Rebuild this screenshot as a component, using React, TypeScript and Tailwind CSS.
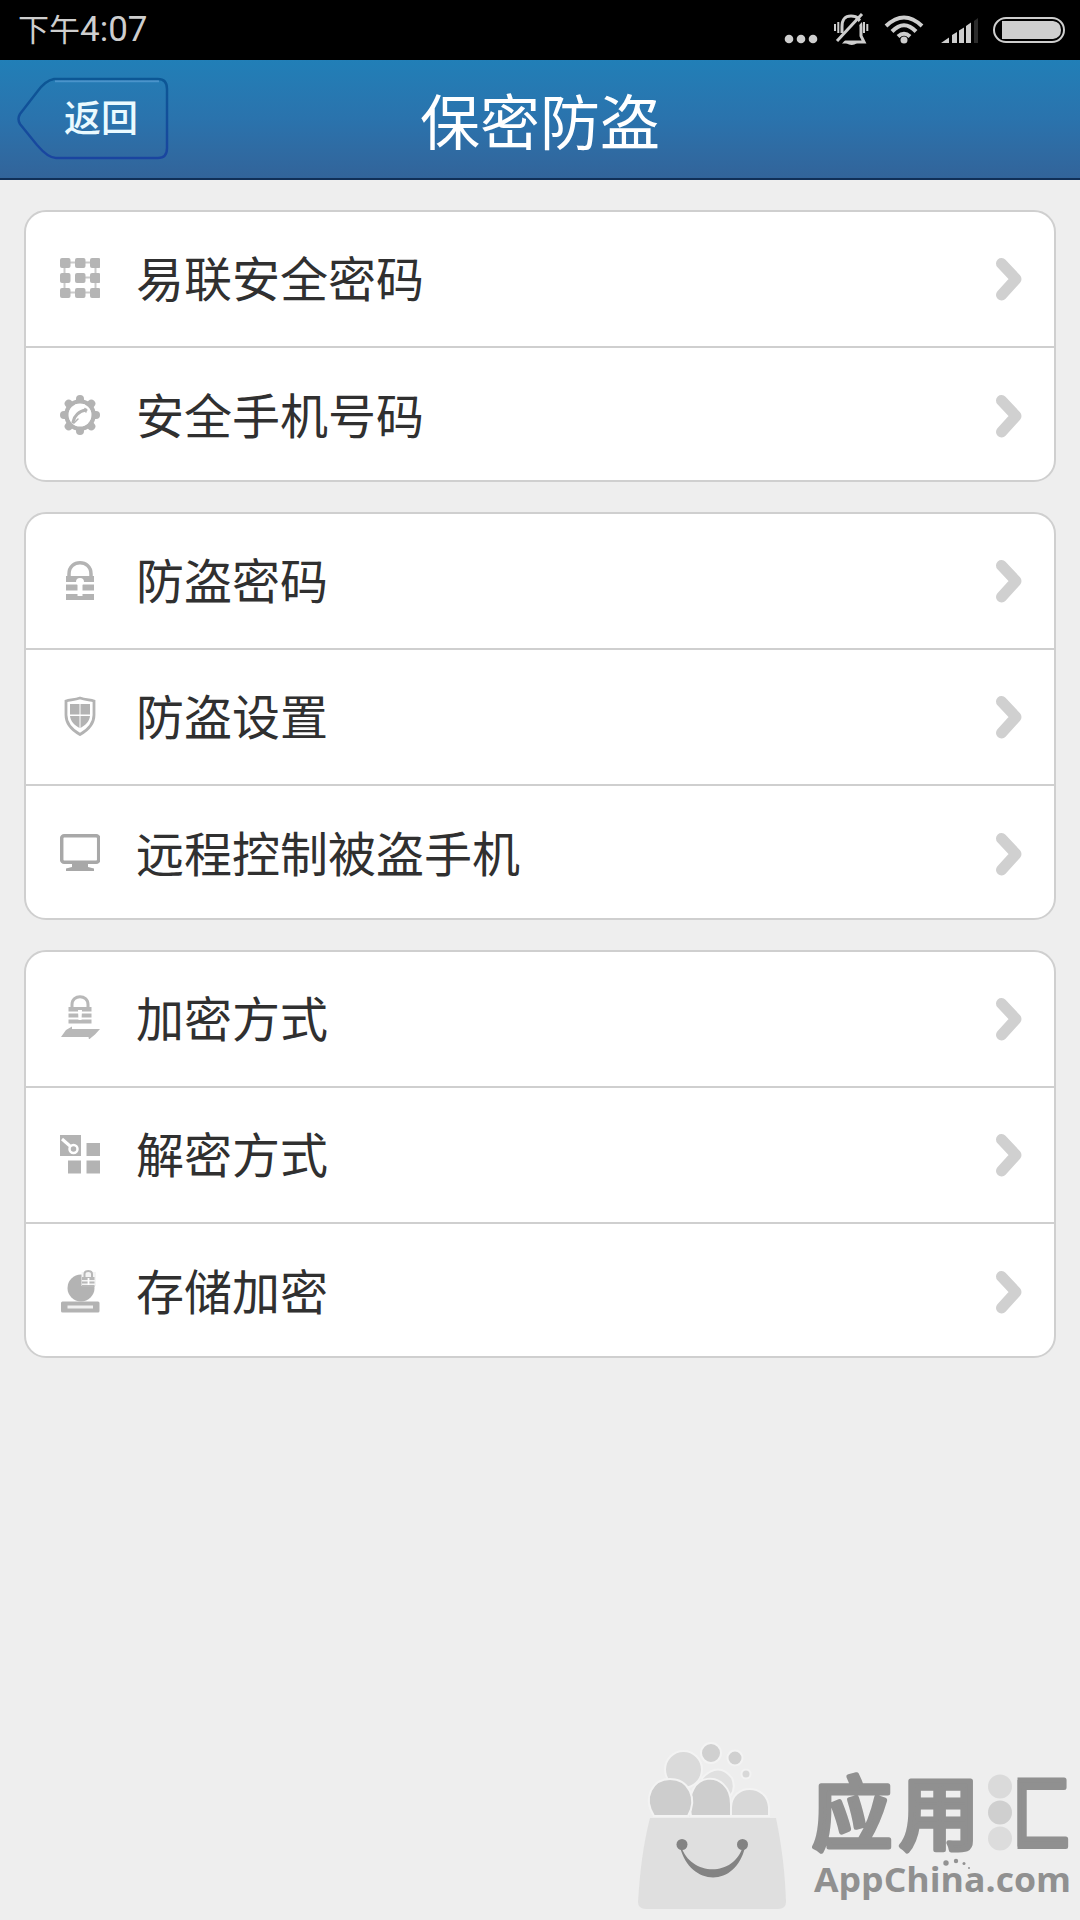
import type { ReactNode } from "react";

const cjk = "font-['Noto_Sans_CJK_SC',sans-serif]";

function Keypad() {
  const pts = [0, 15, 30];
  return (
    <svg viewBox="0 0 40 40" className="mb-[2px] h-10 w-10" fill="#b5b5b5">
      <path d="M4 4.500H36M4 34.500H36M17 19.500H36M4.500 4V34M35.500 4V34" stroke="#cacaca" strokeWidth="2" fill="none" />
      {pts.map((y) => pts.map((x) => <rect key={`${x}-${y}`} x={x} y={y} width="10.500" height="10" rx="2" />))}
    </svg>
  );
}

function Gear() {
  return (
    <svg viewBox="0 0 40 40" className="mb-[2px] h-10 w-10" fill="none" stroke="#b3b3b3">
      <circle cx="20" cy="20" r="13.500" strokeWidth="4.500" />
      {[0, 45, 90, 135, 180, 225, 270, 315].map((a) => (
        <path key={a} d="M20 7V4" strokeWidth="8" strokeLinecap="round" transform={`rotate(${a} 20 20)`} />
      ))}
      <circle cx="20" cy="20" r="11.500" fill="#fff" stroke="none" />
      <path d="M13 27C14 21 19 16 26 15" strokeWidth="3" strokeLinecap="round" />
      <path d="M14 28L18 24M25 13.500L26 17" strokeWidth="1.500" strokeLinecap="round" />
    </svg>
  );
}

function Lock() {
  return (
    <svg viewBox="0 0 40 40" className="h-10 w-10" fill="#b3b3b3">
      <path d="M9 17V13C9 -2 31 -2 31 13V17" fill="none" stroke="#b3b3b3" strokeWidth="3.500" />
      <path d="M6 15H34V21H6ZM6 23.500H34V29.500H6ZM6 33H34V39H6Z" />
      <path d="M16 21a4 4 0 1 1 8 0L22.500 24V35H17.500V24Z" fill="#fff" />
    </svg>
  );
}

function Shield() {
  return (
    <svg viewBox="0 0 40 40" className="mb-[2px] h-10 w-10" fill="#b3b3b3">
      <path d="M20 2C25 3.500 30 4 34 5V19C34 28 28 34 20 38.500C12 34 6 28 6 19V5C10 4 15 3.500 20 2Z" fill="none" stroke="#b3b3b3" strokeWidth="2.800" />
      <path d="M10 8H19.500V18.500H10ZM20.500 8H30V18.500H20.500ZM10 20H19.500V32C14 29 10.500 25 10 20ZM20.500 20H30C29.500 25 26 29 20.500 32Z" />
    </svg>
  );
}

function Monitor() {
  return (
    <svg viewBox="0 0 40 40" className="mb-[3px] h-10 w-10" fill="#a8a8a8">
      <rect x="1.700" y="3.700" width="37" height="26.500" rx="2.500" fill="none" stroke="#a8a8a8" strokeWidth="3.500" />
      <path d="M12 31H28V35L34 36.500V39H6V36.500L12 35Z" />
    </svg>
  );
}

function LockSync() {
  return (
    <svg viewBox="0 0 40 44" className="mb-1 h-11 w-10" fill="#b8b8b8">
      <path d="M12 14V9.500C12 -1 28 -1 28 9.500V14" fill="none" stroke="#b8b8b8" strokeWidth="3" />
      <path d="M8.500 12H31.500V16.500H8.500ZM8.500 18.500H31.500V22.500H8.500ZM8.500 24.500H31.500V28.500H8.500Z" />
      <path d="M18 15H22L21.500 25H18.500Z" fill="#fff" />
      <path d="M1 42L6 35L12 31.500L12 34H40L35 39.500L29 44.500L28.500 42H1Z" />
    </svg>
  );
}

function Tiles() {
  return (
    <svg viewBox="0 0 40 40" className="mb-[3px] h-10 w-10" fill="#b3b3b3">
      <path d="M0 1H21V22H0ZM26.500 9H40V22H26.500ZM8 26.500H21V39.500H8ZM26.500 26.500H40V39.500H26.500Z" />
      <path d="M2 5L10 12" stroke="#fff" strokeWidth="3" />
      <circle cx="13.500" cy="15" r="4" fill="none" stroke="#fff" strokeWidth="2.500" />
    </svg>
  );
}

function Storage() {
  return (
    <svg viewBox="0 0 40 44" className="mb-[2px] h-11 w-10">
      <circle cx="21" cy="19" r="13.500" fill="#b3b3b3" />
      <path d="M21.500 3H36V17H21.500Z" fill="#f4f4f4" />
      <path d="M24.500 9V5C24.500 1 32 1 32 5V9" fill="none" stroke="#b8b8b8" strokeWidth="2" />
      <path d="M22 8H34.500V11H22ZM22 12.500H34.500V14.500H22ZM22 16H34.500V18H22Z" fill="#b8b8b8" />
      <path d="M28.500 9V16" stroke="#fff" strokeWidth="1.800" />
      <rect x="1" y="32.500" width="38.500" height="11" rx="1.500" fill="#b3b3b3" />
      <path d="M7.500 36.500H33V39.500H7.500Z" fill="#f1f1f1" />
    </svg>
  );
}

function Chevron() {
  return (
    <svg viewBox="0 0 30 44" className="h-11 w-[30px]" fill="none" stroke="#d0d0d0" strokeWidth="11" strokeLinecap="round" strokeLinejoin="round">
      <path d="M7.500 6.500L22 22L7.500 38" />
    </svg>
  );
}

function Row({ icon, label }: { icon: ReactNode; label: string }) {
  return (
    <li className="flex h-[136px] items-center border-b-2 border-[#cfcfcf] pr-[30px] pl-[34px] last:h-[132px] last:border-b-0 last:pt-[3px]">
      <span className="flex h-11 w-10 shrink-0 items-center justify-center">{icon}</span>
      <span className="mb-[6px] ml-9 flex-1 text-[48px] leading-[60px] text-[#303030]">{label}</span>
      <Chevron />
    </li>
  );
}

function Card({ children }: { children: ReactNode }) {
  return <ul className="rounded-[22px] border-2 border-[#cfcfcf] bg-white">{children}</ul>;
}

function StatusBar() {
  return (
    <div className="flex h-[60px] justify-between bg-black text-[#cecece]">
      <div className="flex h-[58px] items-center pl-[18px] text-[31px] leading-[58px]">
        <span className="-mt-[2px]">下午</span>
        <span className="mt-[2px] font-[Roboto] text-[35px]">4:07</span>
      </div>
      <svg viewBox="760 0 320 60" className="h-[60px] w-80" fill="#cecece">
        <circle cx="789" cy="39" r="4.300" />
        <circle cx="801" cy="39" r="4.300" />
        <circle cx="813" cy="39" r="4.300" />
        <g fill="none" stroke="#cecece" strokeWidth="3">
          <path d="M842 42H864L861 36V27C861 19 857 16 851 16C844 16 842 20 842 27V33" />
          <path d="M865 17L840 44" stroke="#000" strokeWidth="2.500" />
          <path d="M862 14L837 41" strokeWidth="3" />
          <path d="M835 24V31M838.300 22V33M864 22V33M867.300 24V31" strokeWidth="2" />
        </g>
        <path d="M846 43H857Q852 47 846 43Z" />
        <g fill="none" stroke="#cecece" strokeWidth="4">
          <path d="M886 26Q904 9 922 26M892 31.500Q904 19 916 31.500M898 36.500Q904 31 910 36.500" />
        </g>
        <circle cx="904" cy="40" r="3.500" />
        <path d="M941 43L949 37.500V43ZM952 35L957 32V43H952ZM959 30.500L964 27.500V43H959ZM966 26L971 22.500V43H966Z" />
        <path d="M974 21L978 18V43H974Z" fill="#2c2c2c" />
        <rect x="994" y="18" width="70" height="24" rx="12" fill="none" stroke="#cecece" strokeWidth="2" />
        <path d="M1002 21H1053Q1061 22 1061 30Q1061 38 1053 39H1002Z" />
      </svg>
    </div>
  );
}

function Header() {
  return (
    <header className="relative flex h-[120px] items-center border-b-2 border-[#102f57] bg-linear-to-b from-[#217fb7] via-[#2a73ad] to-[#32649a]">
      <button className="relative ml-[17px] flex h-[84px] w-[152px] items-center pb-[5px] pl-[47px] text-[37px] font-medium text-[#eafaff]">
        <svg viewBox="0 0 152 84" className="absolute inset-0 h-[84px] w-[152px]" fill="none" strokeWidth="2.500">
          <defs>
            <linearGradient id="edge" x1="0" y1="0" x2="0" y2="1">
              <stop offset="0" stopColor="#0c5795" />
              <stop offset="1" stopColor="#1a45a0" />
            </linearGradient>
          </defs>
          <path d="M38 4H142" stroke="#4a94cb" />
          <path d="M37 2H141Q150 2 150 12V71Q150 81 141 81H39C32 81 26 75 20 68L3 47Q0 42 3 37L20 15C25 8 31 3 37 2Z" stroke="url(#edge)" />
        </svg>
        <span className="relative leading-none">返回</span>
      </button>
      <h1 className="pointer-events-none absolute inset-x-0 top-[14px] text-center text-[60px] leading-[90px] text-white">保密防盗</h1>
    </header>
  );
}

function Watermark() {
  return (
    <footer className="mt-auto flex h-[190px] w-[460px] self-end">
      <svg viewBox="0 0 190 190" className="h-[190px] w-[190px] shrink-0">
        <g stroke="#f3f3f3" strokeWidth="2">
          <circle cx="63.500" cy="39.500" r="18.500" fill="#dadada" />
          <path d="M82 48Q99 31 112 48Q116 58 111 65H90Z" fill="#e0e0e0" />
          <circle cx="91" cy="23" r="10" fill="#d0d0d0" />
          <circle cx="115" cy="28" r="7.500" fill="#d0d0d0" />
          <circle cx="126" cy="44" r="4.500" fill="#d8d8d8" />
          <path d="M111 86V77C112 53 147 53 149 77V86Z" fill="#d8d8d8" />
          <path d="M71 86C62 38 111 39 111 74V86Z" fill="#cdcdcd" />
          <path d="M34 86C22 67 33 49 50 49C69 49 78 69 68 86Z" fill="#cdcdcd" />
        </g>
        <path d="M30 88H156C162 117 165 143 166 172Q166 179 158 179H26Q18 179 18 172C20 141 23 115 30 88Z" fill="#dfdfdf" />
        <circle cx="62" cy="114.500" r="5.500" fill="#838383" />
        <circle cx="122.500" cy="114.500" r="5.500" fill="#838383" />
        <path d="M61 116C70 146 114 148 123 116L125 117C116 158 70 157 60 117Z" fill="#838383" />
      </svg>
      <svg viewBox="0 0 270 190" className="h-[190px] w-[270px] shrink-0">
        <defs>
          <clipPath id="frame">
            <path d="M207.500 30H270V126H207.500Z" />
          </clipPath>
        </defs>
        <g fill="#909090" stroke="#909090" strokeWidth="5" strokeLinejoin="round" fontSize="80" fontWeight="500">
          <text x="2" y="113">应</text>
          <text x="89" y="113">用</text>
          <text x="179" y="113" clipPath="url(#frame)">汇</text>
        </g>
        <circle cx="190" cy="56.500" r="12" fill="#dadada" />
        <circle cx="190" cy="82.500" r="12" fill="#cfcfcf" />
        <circle cx="190" cy="108.500" r="12" fill="#dcdcdc" />
        <g fill="#929292">
          <circle cx="136" cy="133" r="2.700" />
          <circle cx="146" cy="131" r="2.200" />
          <circle cx="154" cy="133.500" r="1.500" />
          <circle cx="159" cy="138" r="1" />
        </g>
        <text x="4" y="162" textLength="257" lengthAdjust="spacingAndGlyphs" fill="#909090" className="font-['Open_Sans'] text-[34px] font-bold">AppChina.com</text>
      </svg>
    </footer>
  );
}

export default function App() {
  return (
    <div className={`flex h-[1920px] w-[1080px] flex-col overflow-hidden bg-[#eeeeee] ${cjk}`}>
      <StatusBar />
      <Header />
      <main className="flex flex-col gap-[30px] px-6 pt-[30px]">
        <Card>
          <Row icon={<Keypad />} label="易联安全密码" />
          <Row icon={<Gear />} label="安全手机号码" />
        </Card>
        <Card>
          <Row icon={<Lock />} label="防盗密码" />
          <Row icon={<Shield />} label="防盗设置" />
          <Row icon={<Monitor />} label="远程控制被盗手机" />
        </Card>
        <Card>
          <Row icon={<LockSync />} label="加密方式" />
          <Row icon={<Tiles />} label="解密方式" />
          <Row icon={<Storage />} label="存储加密" />
        </Card>
      </main>
      <Watermark />
    </div>
  );
}
